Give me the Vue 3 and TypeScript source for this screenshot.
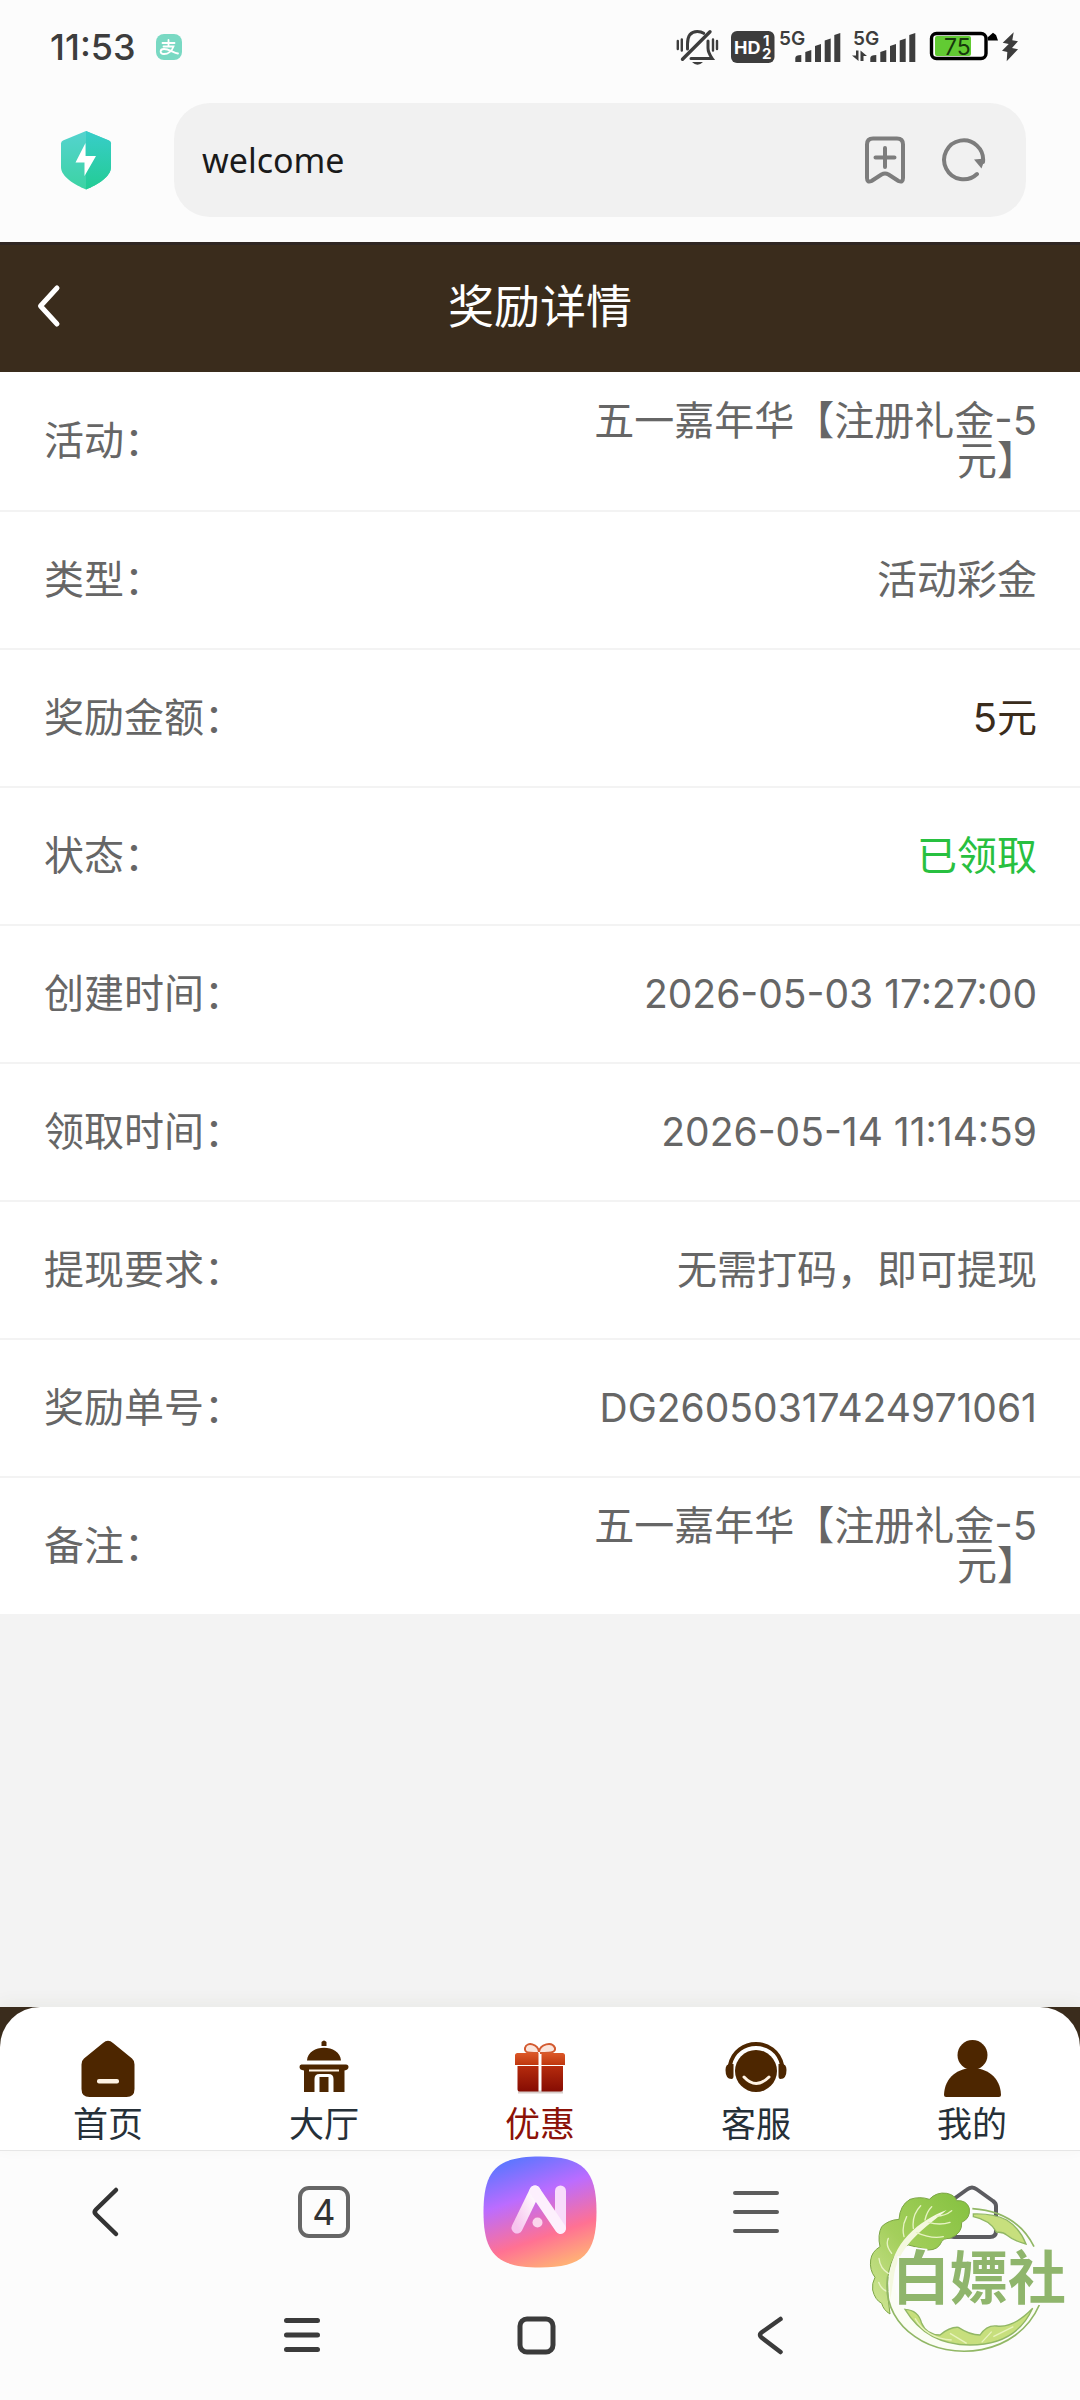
<script setup lang="ts">
import { ref } from 'vue'

interface Detail {
  label: string
  value: string
  tone?: 'amount' | 'done' | 'code'
}

interface Tab {
  id: string
  label: string
}

const address = ref('welcome')
const activeTab = ref('promo')

const details: Detail[] = [
  { label: '活动：', value: '五一嘉年华【注册礼金-5元】' },
  { label: '类型：', value: '活动彩金' },
  { label: '奖励金额：', value: '5元', tone: 'amount' },
  { label: '状态：', value: '已领取', tone: 'done' },
  { label: '创建时间：', value: '2026-05-03 17:27:00', tone: 'code' },
  { label: '领取时间：', value: '2026-05-14 11:14:59', tone: 'code' },
  { label: '提现要求：', value: '无需打码，即可提现' },
  { label: '奖励单号：', value: 'DG26050317424971061', tone: 'code' },
  { label: '备注：', value: '五一嘉年华【注册礼金-5元】' },
]

const tabs: Tab[] = [
  { id: 'home', label: '首页' },
  { id: 'hall', label: '大厅' },
  { id: 'promo', label: '优惠' },
  { id: 'service', label: '客服' },
  { id: 'mine', label: '我的' },
]
</script>

<template>
  <div class="screen">
    <div class="status">
      <div class="status-left">
        <span class="clock">11:53</span>
        <svg width="26" height="26" viewBox="0 0 26 26" fill="none" stroke="#fff" stroke-width="1.800" stroke-linecap="round">
          <rect width="26" height="26" rx="8" fill="#79d9c3" stroke="none" />
          <path d="M6.500 9h12M12.500 6v6.500M7.500 12.500h10C16 17 12 20 8 20c-4.500 0-4.500-5 0-5 5 0 9 3.500 14 4.500" />
        </svg>
      </div>
      <div class="status-right">
        <svg width="50" height="40" viewBox="0 0 50 40" fill="none" stroke="#3d3d3d" stroke-width="3" stroke-linecap="round">
          <path d="M1.800 13v8M5.800 11.500v11M37 11.500v11M41 13v8" stroke-width="2.400" />
          <path d="M11.500 21v-5C11.500 8 15 3.500 21.300 3.500c2.700 0 4.700.600 6.400 1.800M32 13v7c0 4 1 6 4.200 10.500H15" />
          <path d="M6.500 31.300 34 3.700" stroke-width="3.400" />
          <path d="M16 34h11q-5.500 5.500-11 0Z" fill="#3d3d3d" stroke="none" />
        </svg>
        <svg width="45" height="40" viewBox="0 0 45 40" fill="#fff" font-family="Inter, sans-serif" font-weight="700">
          <rect x="1" y="3" width="43.500" height="32" rx="6" fill="#3d3d3d" />
          <text x="4" y="26" font-size="18">HD</text>
          <text x="33" y="18" font-size="15">1</text>
          <text x="32" y="31" font-size="15">2</text>
        </svg>
        <svg width="69" height="40" viewBox="0 0 69 40" fill="#3d3d3d" font-family="Inter, sans-serif" font-weight="600">
          <text x="0" y="17" font-size="19">5G</text>
          <path d="M16.300 34v-4q0-3 6-3v7ZM26.300 34V24l6-2v12ZM36 34V18l6-2v18ZM45.700 34V12.500l6-2V34ZM55.300 34V7l6-2v29Z" />
        </svg>
        <svg width="73" height="40" viewBox="0 0 73 40" fill="#3d3d3d" font-family="Inter, sans-serif" font-weight="600">
          <text x="1" y="17" font-size="19">5G</text>
          <path d="M4 22.500h2.500V33L0 27.500h4ZM8.500 33V22.500L15 28h-3.500v5ZM18.300 34v-4q0-3 6-3v7ZM28.300 34V24l6-2v12ZM38 34V18l6-2v18ZM47.700 34V12.500l6-2V34ZM57.300 34V7l6-2v29Z" />
        </svg>
        <svg width="69" height="40" viewBox="0 0 69 40">
          <rect x="2.500" y="5.500" width="54.500" height="25" rx="5" fill="#fff" stroke="#000" stroke-width="3.400" />
          <rect x="6" y="8" width="36" height="20" rx="2" fill="#62cb33" />
          <path d="M58.500 9.500 64 4.700l3 2.300 2 5.500H59Z" />
          <text x="15" y="27" font-size="23" font-family="Inter, sans-serif" fill="#16380c">75</text>
        </svg>
        <svg width="16" height="40" viewBox="0 0 16 40" fill="#3d3d3d">
          <path d="M11.700 4.300.700 14.700l6 1.300L0 22.700l5.300 1.300-.600 9.300L16 21.300 10 20l6-6.700-5.700-1Z" />
        </svg>
      </div>
    </div>

    <div class="browser-bar">
      <svg class="shield" width="52" height="60" viewBox="0 0 52 60">
        <defs>
          <linearGradient id="shield-fill" x1="0" y1="0" x2="0" y2="1">
            <stop offset="0" stop-color="#54d3cf" />
            <stop offset="1" stop-color="#3cd3a3" />
          </linearGradient>
          <linearGradient id="shield-shade" x1="0" y1="0" x2="0" y2="1">
            <stop offset="0" stop-color="#38cdc9" />
            <stop offset="1" stop-color="#23cc94" />
          </linearGradient>
        </defs>
        <path d="M26 1 49 10.500q2 1 2 3V37c0 10-14 18-25 22.500C15 55 1 47 1 37V13.500q0-2 2-3Z" fill="url(#shield-fill)" />
        <path d="M26 1 49 10.500q2 1 2 3V37c0 10-14 18-25 22.500Z" fill="url(#shield-shade)" />
        <path d="M25.500 13 15.500 32.500h9V46L36 26H25.500Z" fill="#fff" />
      </svg>
      <div class="address">
        <input v-model="address" type="text" aria-label="网址" />
        <button type="button" aria-label="收藏">
          <svg width="44" height="50" viewBox="0 0 44 50" fill="none" stroke="#7d7d7d" stroke-width="4" stroke-linecap="round" stroke-linejoin="round">
            <path d="M10 3.500h24q6 0 6 6V43q0 5-4.500 3l-10-6.500q-3.500-2-7 0L8.500 46Q4 48 4 43V9.500q0-6 6-6ZM22 13v19M12.500 22.500h19" />
          </svg>
        </button>
        <button type="button" aria-label="刷新">
          <svg width="46" height="50" viewBox="0 0 46 50" fill="none" stroke="#7d7d7d" stroke-width="4" stroke-linecap="round">
            <path d="M36 39A19.500 19.500 0 1 1 42 27" />
            <path d="m33 24.500 11-1-3.500 10Z" fill="#7d7d7d" stroke="none" />
          </svg>
        </button>
      </div>
    </div>

    <header class="title-bar">
      <button type="button" aria-label="返回">
        <svg width="28" height="46" viewBox="0 0 28 46" fill="none" stroke="#fff" stroke-width="5" stroke-linecap="round" stroke-linejoin="round">
          <path d="M22 5 5.500 23 22 41" />
        </svg>
      </button>
      <h1>奖励详情</h1>
    </header>

    <main>
      <dl>
        <div v-for="row in details" :key="row.label" class="row">
          <dt>{{ row.label }}</dt>
          <dd :class="row.tone">{{ row.value }}</dd>
        </div>
      </dl>
    </main>

    <footer>
      <div class="tabs-back">
        <nav class="tabs">
          <button
            v-for="tab in tabs"
            :key="tab.id"
            type="button"
            :class="{ active: tab.id === activeTab }"
            @click="activeTab = tab.id"
          >
            <svg v-if="tab.id === 'home'" width="64" height="60" viewBox="0 0 64 60" fill="#4d2600">
              <path d="M27 4q5-4.500 10 0l19 15.500q2.500 2 2.500 6V50q0 8-8 8h-37q-8 0-8-8V25.500q0-4 2.500-6Z" />
              <rect x="21" y="40" width="22" height="4.500" rx="2" fill="#fff3e4" />
            </svg>
            <svg v-else-if="tab.id === 'hall'" width="64" height="60" viewBox="0 0 64 60" fill="#4d2600">
              <path d="M29.500 7V3q2.500-3 5 0v4ZM15 21.500C16 4.500 48 4.500 49 21.500Z" />
              <path d="M10 25.500h44q2.500 0 2.500 2.500t-4 3.500V53H41.500V40q0-5-5-5h-9q-5 0-5 5v13H12V31.500Q7.500 31 7.500 28t2.500-2.500Z" />
              <path d="M27.500 38h9v15h-9Z" />
              <path d="M17 31.500h30" stroke="#fff3e4" stroke-width="2" />
            </svg>
            <svg v-else-if="tab.id === 'promo'" width="64" height="60" viewBox="0 0 64 60">
              <defs>
                <linearGradient id="gift-lid" x1="0" y1="0" x2="0" y2="1">
                  <stop offset="0" stop-color="#dc5828" />
                  <stop offset="1" stop-color="#be360e" />
                </linearGradient>
                <linearGradient id="gift-box" x1="0" y1="0" x2="0" y2="1">
                  <stop offset="0" stop-color="#b52b0d" />
                  <stop offset="1" stop-color="#850c03" />
                </linearGradient>
              </defs>
              <path d="M30 14C24 14 16 15 17 9c2-7 13-4 14 4 1-8 13-11 16-4 1 6-9 5-15 5" fill="#fbe5dc" stroke="#d35b31" stroke-width="2" />
              <path d="M10 53h45" stroke="#d7cdca" stroke-width="3" />
              <path d="M9.500 14h21v12H7V16.500Q7 14 9.500 14ZM33.500 14h21q2.500 0 2.500 2.500V26H33.500Z" fill="url(#gift-lid)" />
              <path d="M9.500 27h21v25.500h-19q-2 0-2-2ZM33.500 27H55v23.500q0 2-2 2H33.500Z" fill="url(#gift-box)" />
            </svg>
            <svg v-else-if="tab.id === 'service'" width="64" height="60" viewBox="0 0 64 60" fill="none" stroke-linecap="round">
              <path d="M6 26C12-2 52-2 58 26" stroke="#4d2600" stroke-width="4" />
              <path d="M6 25Q1.500 25 1.500 31q0 9 6 9 2 0 2-3V25ZM58 25q4.500 0 4.500 6 0 9-6 9-2 0-2-3V25Z" fill="#4d2600" />
              <circle cx="32" cy="32" r="21" fill="#4d2600" />
              <path d="M20 38q12 13 25 0" stroke="#fff3e4" stroke-width="3" />
            </svg>
            <svg v-else width="64" height="60" viewBox="0 0 64 60" fill="#4d2600">
              <circle cx="32.500" cy="16" r="15" />
              <path d="M4 56C5 20 60 20 61 56q0 2-2 2H6q-2 0-2-2Z" />
            </svg>
            <span>{{ tab.label }}</span>
          </button>
        </nav>
      </div>

      <nav class="browser-nav" aria-label="浏览器">
        <button type="button" aria-label="后退">
          <svg width="54" height="54" viewBox="0 0 54 54" fill="none" stroke="#333" stroke-width="4.500" stroke-linecap="round" stroke-linejoin="round">
            <path d="M35 5 15 24.500q-2.500 2.500 0 5L35 49" />
          </svg>
        </button>
        <button type="button" aria-label="标签页"><span class="count">4</span></button>
        <button type="button" aria-label="AI">
          <svg width="114" height="112" viewBox="0 0 114 112">
            <defs>
              <linearGradient id="ai-fill" x1="0.300" y1="0" x2="0.650" y2="1">
                <stop offset="0" stop-color="#5b76ff" />
                <stop offset="0.350" stop-color="#bb6cff" />
                <stop offset="0.720" stop-color="#ff7193" />
                <stop offset="1" stop-color="#ffb176" />
              </linearGradient>
              <linearGradient id="ai-leg" x1="0" y1="1" x2="1" y2="0">
                <stop offset="0" stop-color="#f7c4ee" />
                <stop offset="1" stop-color="#fff" />
              </linearGradient>
            </defs>
            <path d="M57 .500C100 .500 113.500 14 113.500 56S100 111.500 57 111.500.500 98 .500 56 14 .500 57 .500Z" fill="url(#ai-fill)" />
            <g fill="none" stroke-width="11" stroke-linecap="round" stroke-linejoin="round">
              <path d="M77.500 35v36" stroke="#f8dcfb" />
              <path d="M34 72 52 35" stroke="url(#ai-leg)" />
              <path d="m52 35 25.500 37.500" stroke="#fdf0fd" />
            </g>
            <circle cx="54.500" cy="66.500" r="5" fill="#fbd5ec" />
          </svg>
        </button>
        <button type="button" aria-label="菜单">
          <svg width="54" height="54" viewBox="0 0 54 54" stroke="#5c5c5c" stroke-width="4" stroke-linecap="round">
            <path d="M6 8h42M6 27h42M6 46h42" />
          </svg>
        </button>
        <button type="button" aria-label="主页">
          <svg width="54" height="54" viewBox="0 0 54 54" fill="none" stroke="#5c5c60" stroke-width="4" stroke-linejoin="round">
            <path d="M22 4.500q5-4 10 0L48 16q3 2 3 5v25q0 6-6 6H9q-6 0-6-6V21q0-3 3-5Z" />
          </svg>
        </button>
      </nav>

      <nav class="system-nav" aria-label="系统">
        <button type="button" aria-label="最近任务">
          <svg width="40" height="40" viewBox="0 0 40 40" stroke="#3b3b3b" stroke-width="5" stroke-linecap="round">
            <path d="M4.500 5.500h31M4.500 20h31M4.500 34.500h31" />
          </svg>
        </button>
        <button type="button" aria-label="主屏幕">
          <svg width="40" height="40" viewBox="0 0 40 40" fill="none" stroke="#3b3b3b" stroke-width="5">
            <rect x="4" y="4" width="33" height="33" rx="7" />
          </svg>
        </button>
        <button type="button" aria-label="返回上一页">
          <svg width="40" height="40" viewBox="0 0 40 40" fill="none" stroke="#3b3b3b" stroke-width="4.500" stroke-linecap="round" stroke-linejoin="round">
            <path d="M30.500 4 11.500 17.500q-3 2.500 0 5L30.500 37" />
          </svg>
        </button>
      </nav>

      <svg class="badge" width="210" height="166" viewBox="195 600 630 498" fill="none">
        <defs>
          <linearGradient id="leaf" x1="1" y1="0" x2="0" y2="1">
            <stop offset="0" stop-color="#84c13f" />
            <stop offset="0.550" stop-color="#a4cf5c" />
            <stop offset="1" stop-color="#d3e79a" />
          </linearGradient>
        </defs>
        <path d="M283 800C235 900 262 965 315 1015Q390 1085 500 1085 650 1080 718 945L698 955Q645 1065 510 1065C390 1060 300 990 283 880Z" fill="#fbfdf5" />
        <path d="M270 972q-20-12-25-32-20-10-27-40-3-20 7-38-17-22-13-52 3-25 28-40-8-35 5-60 20-20 52-22 3-43 33-60 30-10 58 0 22-23 52-18 25 5 30 22 30-2 38 23 4 30-23 42 3 33-35 48-20 0-25 10-10 25-40 25-40-10-60-15-25 5-42 35-21 40-20 80 0 50 7 92Z" fill="url(#leaf)" stroke="#7da646" stroke-width="3" />
        <path d="M268 870C270 760 360 690 440 660 380 710 300 760 283 850l-12 80Z" fill="#f4f8df" />
        <path d="M312 740q-8-30 8-60M340 715q-5-40 22-68M375 690q5-25 20-40M350 728q45 20 80 12M385 697q35 10 65 0M410 678q25 0 45-16M275 790q-20-25-10-45M265 850q-25-15-28-45M264 905q-20-5-28-28" stroke="#e7f3c3" stroke-width="4" stroke-linecap="round" />
        <path d="M263 860C250 950 300 1010 345 1040 450 1115 650 1100 718 945M517 656Q650 665 702 770" stroke="#91b765" stroke-width="5" />
        <path d="M520 672q60-2 100 18 40 25 58 72-38-10-58-27-10-10-30-8-20-37-70-47ZM315 958q40 2 50 42 15 35 55 35 30-25 55-23 35 23 65 23 20-30 50-27 50 7 108-53-50 110-188 110-130 0-195-107Z" fill="#c7df7d" stroke="#91b765" stroke-width="4" />
        <path d="M345 985q35 60 110 65M450 1030l50 30M575 1025l-30 32M640 1010l-60 30" stroke="#e8f3bd" stroke-width="4" />
        <text x="276" y="928" class="badge-text">白嫖社</text>
      </svg>
    </footer>
  </div>
</template>

<style>
body {
  margin: 0;
  background: #fcfcfc;
}
</style>

<style scoped>
.screen {
  display: flex;
  flex-direction: column;
  min-height: 100vh;
  background: #fcfcfc;
  color: #666;
  font-family: Inter, "Noto Sans CJK SC", sans-serif;
}

button {
  display: flex;
  align-items: center;
  justify-content: center;
  padding: 0;
  border: 0;
  background: none;
  font: inherit;
  color: inherit;
}

svg {
  display: block;
  flex: none;
}

.status {
  display: flex;
  align-items: center;
  justify-content: space-between;
  height: 93px;
  padding: 0 62px 10px 50px;
}

.status-left {
  display: flex;
  align-items: center;
  gap: 20px;
}

.clock {
  font-size: 36px;
  font-weight: 500;
  line-height: 40px;
  color: #3d3d3d;
}

.status-right {
  display: flex;
  gap: 4px;
  padding-top: 2px;
}

.browser-bar {
  display: flex;
  align-items: center;
  padding: 0 54px 25px 60px;
}

.address {
  display: flex;
  flex: 1;
  align-items: center;
  gap: 34px;
  height: 114px;
  margin-left: 62px;
  padding: 0 39px 0 28px;
  border-radius: 36px;
  background: #f1f1f1;
}

.address input {
  flex: 1;
  min-width: 0;
  padding: 0;
  border: 0;
  outline: 0;
  background: none;
  color: #1a1a1a;
  font: 34px/48px "Noto Sans", sans-serif;
}

.title-bar {
  display: grid;
  grid-template-columns: 98px 1fr 98px;
  align-items: center;
  height: 121px;
  padding-bottom: 6px;
  border-top: 3px solid #2f2622;
  background: #3a2c1c;
  color: #fff;
}

.title-bar h1 {
  margin: 0;
  font-size: 46px;
  font-weight: 400;
  line-height: 60px;
  text-align: center;
}

main {
  flex: 1;
  background: #f3f3f3;
}

dl {
  margin: 0;
}

.row {
  display: flex;
  align-items: center;
  justify-content: space-between;
  box-sizing: border-box;
  min-height: 138px;
  padding: 0 43px 0 44px;
  background: #fff;
  font-size: 40px;
  line-height: 40px;
}

.row + .row {
  border-top: 2px solid #f3f3f3;
}

dd {
  max-width: 46%;
  margin: 0;
  text-align: right;
}

.amount {
  color: #3a2c1c;
}

.done {
  color: #28c040;
}

.code {
  font-size: 39px;
}

footer {
  position: relative;
}

.tabs-back {
  background: #3a2c1c;
  box-shadow: 0 -4px 16px rgba(80, 80, 30, 0.06);
}

.tabs {
  display: flex;
  height: 143px;
  border-bottom: 1px solid #e6e6e6;
  border-radius: 40px 40px 0 0;
  background: #fff;
}

.tabs button {
  flex: 1;
  flex-direction: column;
  justify-content: flex-start;
  padding-top: 32px;
  color: #263038;
  font-size: 35px;
  line-height: 50px;
}

.tabs .active {
  color: #8c1208;
}

.browser-nav {
  display: flex;
  align-items: center;
  height: 122px;
}

.browser-nav button {
  flex: 1;
}

.count {
  width: 44px;
  border: 4px solid #666;
  border-radius: 11px;
  color: #333;
  font-size: 36px;
  line-height: 44px;
  text-align: center;
}

.system-nav {
  display: flex;
  align-items: center;
  height: 123px;
  padding: 0 17.9% 4px 17.1%;
}

.system-nav button {
  flex: 1;
}

.badge {
  position: absolute;
  right: 5px;
  bottom: 44px;
}

.badge-text {
  fill: #8fb56c;
  stroke: #fcfcfc;
  stroke-width: 10px;
  paint-order: stroke;
  font-family: "Noto Sans CJK SC", sans-serif;
  font-size: 174px;
  font-weight: 700;
}
</style>
